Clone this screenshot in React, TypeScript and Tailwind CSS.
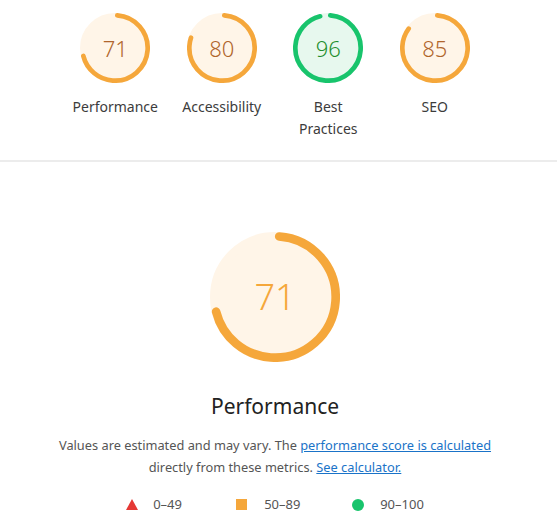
import React from "react";

type Tone = "average" | "pass";

const tones: Record<Tone, { stroke: string; fill: string; text: string }> = {
  average: { stroke: "#f5a73b", fill: "#fff5e8", text: "#b0652c" },
  pass: { stroke: "#18c46c", fill: "#e7f8ee", text: "#1f8f2f" },
};

const C = 2 * Math.PI * 56;

function Gauge({ score, tone, size }: { score: number; tone: Tone; size: number }) {
  const t = tones[tone];
  return (
    <svg width={size} height={size} viewBox="0 0 120 120" className="block">
      <circle cx="60" cy="60" r="56" fill={t.fill} stroke={t.fill} strokeWidth="8" />
      <circle
        cx="60"
        cy="60"
        r="56"
        fill="none"
        stroke={t.stroke}
        strokeWidth="8"
        strokeLinecap="round"
        strokeDasharray={`${(score / 100) * C - 4} ${C}`}
        transform="rotate(-86 60 60)"
      />
    </svg>
  );
}

const categories: { score: number; tone: Tone; label: React.ReactNode }[] = [
  { score: 71, tone: "average", label: "Performance" },
  { score: 80, tone: "average", label: "Accessibility" },
  { score: 96, tone: "pass", label: (<>Best<br />Practices</>) },
  { score: 85, tone: "average", label: "SEO" },
];

export default function App() {
  return (
    <div className="w-[557px] h-[521px] overflow-hidden bg-white font-['Noto_Sans','Liberation_Sans',sans-serif] text-[#3a3a3a]">
      <div className="w-[550px]">
        <div className="flex justify-center pt-[13px] h-[160px]">
          {categories.map((c, i) => (
            <div key={i} className="w-[106.5px] flex flex-col items-center">
              <div className="relative">
                <Gauge score={c.score} tone={c.tone} size={70} />
                <div
                  className="absolute inset-0 flex items-center justify-center text-[22px] font-light"
                  style={{ color: tones[c.tone].text }}
                >
                  {c.score}
                </div>
              </div>
              <div className="mt-[13px] text-[14px] leading-[22px] text-center text-[#3c3c3c]">{c.label}</div>
            </div>
          ))}
        </div>
      </div>
      <div className="h-[2px] bg-[#ececec]" />
      <div className="w-[550px] flex flex-col items-center pt-[70px]">
        <div className="relative">
          <Gauge score={71} tone="average" size={130} />
          <div className="absolute inset-0 flex items-center justify-center text-[36px] font-light text-[#f5a73b]">
            71
          </div>
        </div>
        <div className="mt-[30px] text-[21px] leading-[28px] text-[#222]">Performance</div>
        <p className="mt-[14px] text-[12.8px] leading-[22px] text-center text-[#555] w-[470px]">
          Values are estimated and may vary. The{" "}
          <a href="#" className="text-[#1a73c8] underline">performance score is calculated</a>{" "}
          directly from these metrics.{" "}
          <a href="#" className="text-[#1a73c8] underline">See calculator.</a>
        </p>
        <div className="mt-[17px] flex items-center text-[13px] text-[#555]">
          <div className="flex items-center w-[110px]">
            <svg width="12" height="11" viewBox="0 0 12 11" className="mr-[15px]">
              <polygon points="6,0 12,11 0,11" fill="#e53935" />
            </svg>
            <span>0–49</span>
          </div>
          <div className="flex items-center w-[116px]">
            <span className="w-[11px] h-[11px] bg-[#f5a73b] mr-[17px]" />
            <span>50–89</span>
          </div>
          <div className="flex items-center">
            <span className="w-[12px] h-[12px] rounded-full bg-[#18c46c] mr-[16px]" />
            <span>90–100</span>
          </div>
        </div>
      </div>
    </div>
  );
}
